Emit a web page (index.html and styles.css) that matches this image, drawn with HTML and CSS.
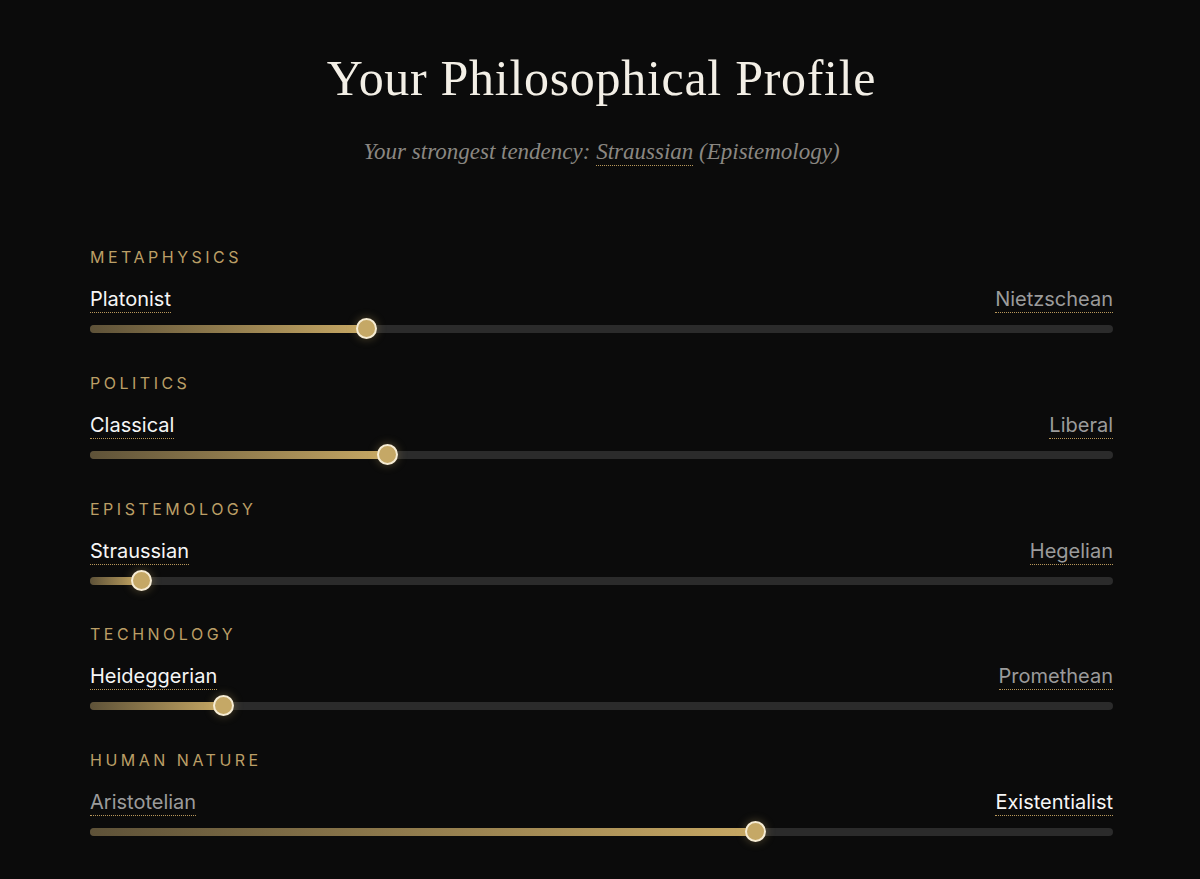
FILE: index.html
```html
<!DOCTYPE html>
<html lang="en">
<head>
<meta charset="utf-8">
<title>Your Philosophical Profile</title>
<link rel="stylesheet" href="styles.css">
</head>
<body>
<main class="page">
  <header class="intro">
    <h1 class="title">Your Philosophical Profile</h1>
    <p class="subtitle">Your strongest tendency: <span class="term">Straussian</span> (Epistemology)</p>
  </header>

  <section class="axis">
    <h2 class="axis-name">Metaphysics</h2>
    <div class="poles">
      <span class="pole active">Platonist</span>
      <span class="pole">Nietzschean</span>
    </div>
    <div class="track">
      <div class="fill" style="width: 27%"><span class="thumb"></span></div>
    </div>
  </section>

  <section class="axis">
    <h2 class="axis-name">Politics</h2>
    <div class="poles">
      <span class="pole active">Classical</span>
      <span class="pole">Liberal</span>
    </div>
    <div class="track">
      <div class="fill" style="width: 29%"><span class="thumb"></span></div>
    </div>
  </section>

  <section class="axis">
    <h2 class="axis-name">Epistemology</h2>
    <div class="poles">
      <span class="pole active">Straussian</span>
      <span class="pole">Hegelian</span>
    </div>
    <div class="track">
      <div class="fill" style="width: 5%"><span class="thumb"></span></div>
    </div>
  </section>

  <section class="axis">
    <h2 class="axis-name">Technology</h2>
    <div class="poles">
      <span class="pole active">Heideggerian</span>
      <span class="pole">Promethean</span>
    </div>
    <div class="track">
      <div class="fill" style="width: 13%"><span class="thumb"></span></div>
    </div>
  </section>

  <section class="axis">
    <h2 class="axis-name">Human Nature</h2>
    <div class="poles">
      <span class="pole">Aristotelian</span>
      <span class="pole active">Existentialist</span>
    </div>
    <div class="track">
      <div class="fill" style="width: 65%"><span class="thumb"></span></div>
    </div>
  </section>
</main>
</body>
</html>
```

FILE: styles.css
```css
html, body {
  margin: 0;
  padding: 0;
  background: #0b0b0b;
}

body {
  font-family: Inter, "Noto Sans", "Liberation Sans", sans-serif;
  color: #e8e8e8;
}

.page {
  width: 1023px;
  margin: 0 auto;
  padding: 48px 0 40px 3px;
}

.intro {
  text-align: center;
  margin-bottom: 80px;
}

.title {
  margin: 0;
  font-family: "Liberation Serif", "DejaVu Serif", serif;
  font-weight: 400;
  font-size: 50px;
  line-height: 60px;
  color: #f3efe6;
  letter-spacing: 0.7px;
}

.subtitle {
  margin: 29px 0 0;
  font-family: "Liberation Serif", "DejaVu Serif", serif;
  font-style: italic;
  font-size: 23px;
  line-height: 30px;
  color: #8a8782;
}

.term {
  text-decoration-line: underline;
  text-decoration-style: dotted;
  text-decoration-color: #b8975a;
  text-decoration-thickness: 1px;
  text-underline-offset: 6px;
}

.axis {
  margin-bottom: 39.8px;
}

.axis-name {
  margin: 0 0 20px;
  font-size: 16px;
  line-height: 20px;
  font-weight: 400;
  letter-spacing: 3.5px;
  text-transform: uppercase;
  color: #bb9f66;
}

.poles {
  display: flex;
  justify-content: space-between;
  align-items: flex-end;
  margin-bottom: 12px;
}

.pole {
  font-size: 20px;
  line-height: 24px;
  padding-bottom: 1px;
  color: #9b9b9b;
  border-bottom: 1px dotted #b8975a;
}

.pole.active {
  color: #f6f6f6;
}

.track {
  position: relative;
  height: 8px;
  border-radius: 4px;
  background: #2b2b2b;
}

.fill {
  position: relative;
  height: 100%;
  border-radius: 4px;
  background: linear-gradient(90deg, #5e5238 0%, #c7a864 100%);
}

.thumb {
  position: absolute;
  right: -11px;
  top: 50%;
  width: 17px;
  height: 17px;
  margin-top: -11px;
  border-radius: 50%;
  background: #c5a866;
  border: 2.5px solid #f6ecd4;
  box-shadow: 0 0 10px rgba(214, 184, 110, 0.35);
}
```
